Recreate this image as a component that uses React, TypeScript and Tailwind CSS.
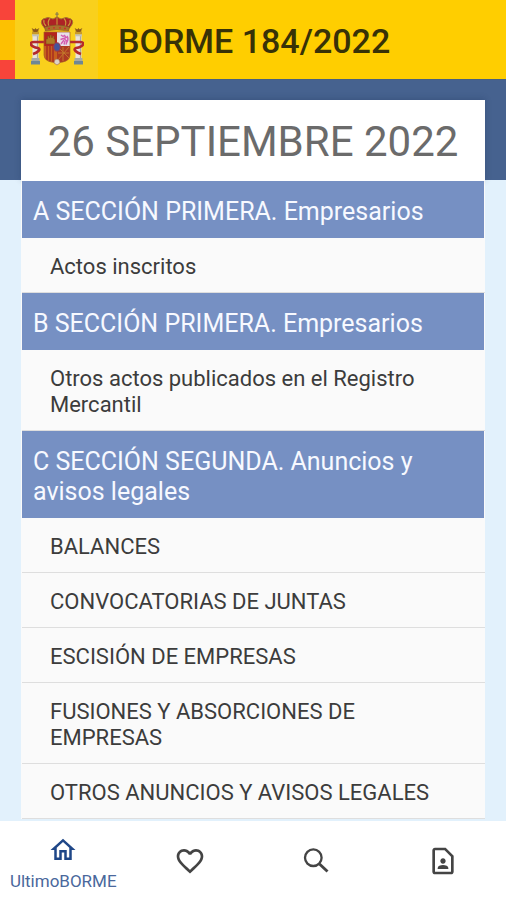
import { MdFavoriteBorder, MdOutlineContactPage, MdOutlineHome } from 'react-icons/md'

const sections = [
  {
    title: 'A SECCIÓN PRIMERA. Empresarios',
    items: ['Actos inscritos'],
  },
  {
    title: 'B SECCIÓN PRIMERA. Empresarios',
    items: ['Otros actos publicados en el Registro Mercantil'],
  },
  {
    title: 'C SECCIÓN SEGUNDA. Anuncios y avisos legales',
    items: [
      'BALANCES',
      'CONVOCATORIAS DE JUNTAS',
      'ESCISIÓN DE EMPRESAS',
      'FUSIONES Y ABSORCIONES DE EMPRESAS',
      'OTROS ANUNCIOS Y AVISOS LEGALES',
    ],
  },
]

function SearchIcon({ className }: { className?: string }) {
  return (
    <svg viewBox="0 0 32 32" className={className} fill="none" stroke="currentColor" aria-hidden="true">
      <circle cx="13.300" cy="12.700" r="8.300" strokeWidth="2.300" />
      <path d="M19.500 19l8 7.500" strokeWidth="2.900" />
    </svg>
  )
}

const tabs = [
  { label: 'UltimoBORME', Icon: MdOutlineHome, active: true },
  { label: 'Favoritos', Icon: MdFavoriteBorder, active: false },
  { label: 'Buscar', Icon: SearchIcon, active: false },
  { label: 'Contacto', Icon: MdOutlineContactPage, active: false },
]

function Pillar() {
  return (
    <g>
      <path d="M2.5 4h6M3 2.500l1 2h3l1-2-1.500.8-1-1.300-1 1.300z" fill="#a8321c" stroke="#8c5a1c" strokeWidth="1.200" />
      <rect x="2" y="5" width="7" height="2.500" fill="#c99a2a" />
      <rect x="2.500" y="8" width="6" height="23" fill="#e9e3dc" />
      <path d="M7.500 8v23" stroke="#a9a9a8" strokeWidth="1.200" />
      <rect x="2" y="7.300" width="7" height="2" fill="#c4c2b8" />
      <rect x="1.500" y="31" width="8" height="3" fill="#a6a9a6" />
      <rect x="1" y="34" width="9" height="3.500" fill="#6f8795" />
    </g>
  )
}

// Coat of arms: crown, quartered shield and the two pillars of Hercules
function CoatOfArms() {
  return (
    <svg viewBox="0 0 54 55" className="h-[55px] w-[54px]" aria-hidden="true">
      <g transform="translate(0 15)">
        <Pillar />
      </g>
      <g transform="translate(43 15)">
        <Pillar />
      </g>

      <path
        d="M14 30H4q-4 0-3 2.500T8 36q2.500 1 .5 3T3 42M40 30h10q4 0 3 2.500T46 36q-2.500 1-.5 3t5.500 3"
        fill="none"
        stroke="#b52a2c"
        strokeWidth="2.600"
      />

      <path d="M27 0v7M25.300 2.200h3.400" stroke="#8a7c4a" strokeWidth="1.200" />
      <path
        d="M14.500 16Q9 10 13 7q5-3 10 0l4-2 4 2q5-3 10 0 4 3-1.500 9Q27 12.500 14.500 16z"
        fill="#ad2225"
        stroke="#a77a2a"
        strokeWidth="1"
      />
      <path d="M27 6v8M20 6.500q-3 3-1 8M34 6.500q3 3 1 8M14 8q-1 3 2 6M40 8q1 3-2 6" fill="none" stroke="#c99a3a" strokeWidth="1.100" />
      <path d="M14.500 15Q27 11 39.500 15L38.500 19Q27 16.500 15.500 19z" fill="#a9702c" stroke="#7d4a22" strokeWidth=".6" />
      <path d="M18 16.500h2M23 15.800h2M29 15.800h2M34 16.500h2" stroke="#c9302a" strokeWidth="1.300" />

      <path d="M14 20h13v14H14z" fill="#b4241f" />
      <path d="M27 20h13v14H27z" fill="#e7dfe7" />
      <path d="M14 34h13v16q-5 1-9-1t-4-6z" fill="#c8601d" />
      <path d="M27 34h13v9q0 4-4 6t-9 1z" fill="#ad3a22" />
      <path d="M17 34v14M20 34v15.500M23 34v16" stroke="#a82e20" strokeWidth="1.500" />
      <path d="M27 34l12 12M39 35L28 48M33 35v14M28 41h11" stroke="#c2762a" strokeWidth="1" />
      <path d="M16 32v-5h1.500v-3H19v1.500h1V23h1.500v2.500h1V24H24v3h1v5z" fill="#ae7a24" stroke="#7c471b" strokeWidth=".5" />
      <path
        d="M31 23l2 1.500 1.500-1 1.500 2-2 1 3 3-1 3M33.500 26.500l-3 1M34 28l-3 4M35 29l-1 3.500M37 24q2 3 0 6"
        fill="none"
        stroke="#d45bb0"
        strokeWidth="1.400"
      />
      <path d="M14 20h26v23q0 4-4 6-4 1.500-9 2-5-.5-9-2-4-2-4-6z" fill="none" stroke="#a65f24" strokeWidth=".7" />
      <path d="M24 51q0-4 3-4t3 4l-3 2z" fill="#ddd3c4" stroke="#9d654a" strokeWidth=".6" />
      <ellipse cx="27" cy="35" rx="3.300" ry="4.200" fill="#44549b" stroke="#a53a45" strokeWidth="1" />
    </svg>
  )
}

function Header() {
  return (
    <header className="flex h-20 shrink-0 items-stretch border-b border-[#476080] bg-[#ffce00]">
      <div className="flex w-[15px] flex-col">
        <div className="h-5 bg-[#f8443a]" />
        <div className="flex-1 bg-[#fdc101]" />
        <div className="h-[19px] bg-[#f8443a]" />
      </div>
      <div className="flex w-[83px] items-center justify-center bg-[#f9d01c]">
        <CoatOfArms />
      </div>
      <h1 className="flex items-center pl-5 pt-1 text-[34px] font-medium text-[#383207]">BORME 184/2022</h1>
    </header>
  )
}

export default function App() {
  return (
    <div className="flex h-screen flex-col overflow-hidden bg-[#e2f1fc] font-[Roboto,sans-serif]">
      <Header />

      <main className="min-h-0 flex-1 overflow-hidden">
        <div className="h-[100px] bg-[#46628f]" />
        <div className="mx-[21px] -mt-20 bg-[#fafafa] pl-px">
          <h2 className="-ml-px bg-white pt-[17px] pb-3.5 text-center text-[42px] leading-[50px] text-[#6b6b6b] shadow-[0_-1px_6px_rgba(20,40,80,0.25)]">
            26 SEPTIEMBRE 2022
          </h2>
          {sections.map(({ title, items }) => (
            <section key={title} className="relative">
              <h3 className="mr-px bg-[#7690c3] px-[11px] pt-4 pb-[11px] text-[25px] leading-[30px] text-[#f7f9ff]">
                {title}
              </h3>
              <ul>
                {items.map((item) => (
                  <li key={item} className="border-b border-[#dedede]">
                    <a href="#" className="block pt-4 pr-9 pb-3 pl-7 text-[22px] leading-[26px] text-[#3c3c3c]">
                      {item}
                    </a>
                  </li>
                ))}
              </ul>
            </section>
          ))}
        </div>
      </main>

      <nav className="flex h-[79px] shrink-0 bg-white">
        {tabs.map(({ label, Icon, active }) => (
          <button
            key={label}
            type="button"
            aria-label={label}
            className={`flex flex-1 flex-col items-center justify-center ${active ? 'pt-1.5 text-[#1f4788]' : 'text-[#444]'}`}
          >
            <Icon className={active ? 'size-[30px]' : 'size-8'} />
            {active && <span className="mt-1 text-[17px] leading-6 text-[#4a689c]">{label}</span>}
          </button>
        ))}
      </nav>
    </div>
  )
}
